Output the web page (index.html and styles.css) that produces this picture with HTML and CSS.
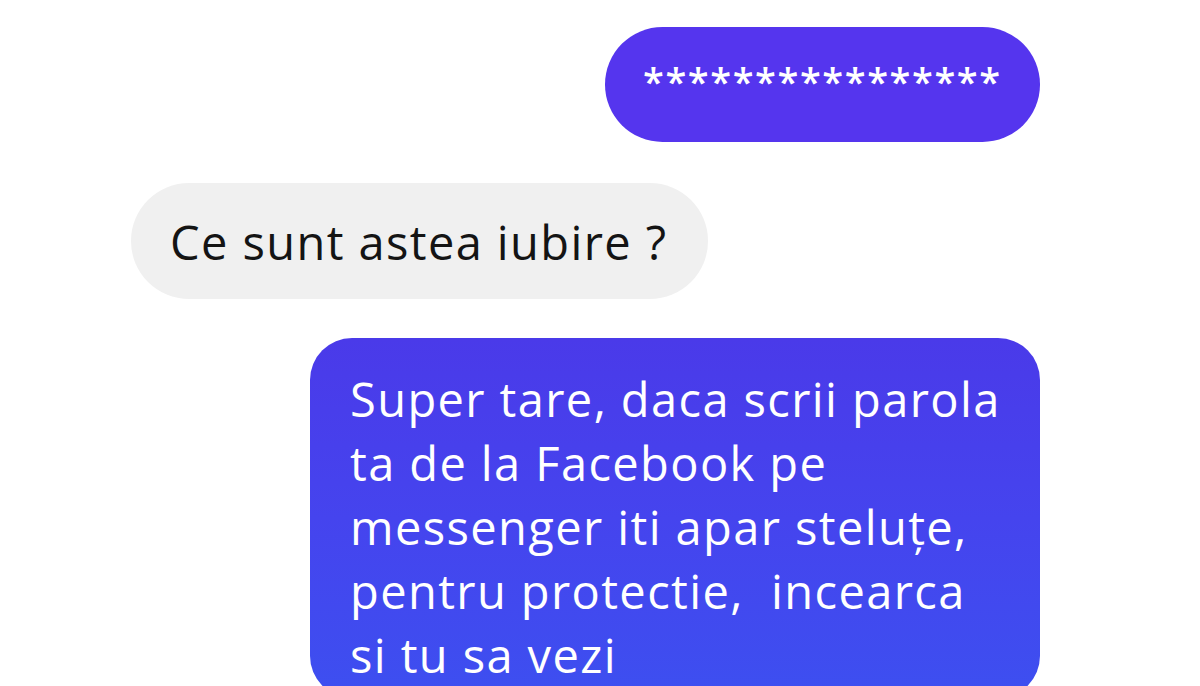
FILE: index.html
```html
<!DOCTYPE html>
<html lang="ro">
<head>
<meta charset="utf-8">
<title>Chat</title>
<link rel="stylesheet" href="styles.css">
</head>
<body>
<main class="chat">
  <div class="row row-out">
    <div class="bubble bubble-stars">****************</div>
  </div>
  <div class="row row-in">
    <div class="bubble bubble-in">Ce sunt astea iubire ?</div>
  </div>
  <div class="row row-out">
    <div class="bubble bubble-long">Super tare, daca scrii parola<br>ta de la Facebook pe<br>messenger iti apar steluțe,<br>pentru protectie,&nbsp; incearca<br>si tu sa vezi</div>
  </div>
</main>
</body>
</html>
```
FILE: styles.css
```css
html, body {
  margin: 0;
  padding: 0;
  background: #ffffff;
  overflow: hidden;
}
.chat {
  width: 1200px;
  height: 686px;
  padding-top: 27px;
  box-sizing: border-box;
  display: flex;
  flex-direction: column;
  overflow: hidden;
  font-family: "Open Sans", "Liberation Sans", sans-serif;
  font-size: 47px;
  letter-spacing: 1.4px;
}
.row {
  display: flex;
  flex-shrink: 0;
}
.row-out {
  justify-content: flex-end;
  padding-right: 160px;
}
.row-in {
  justify-content: flex-start;
  padding-left: 131px;
  margin-top: 41px;
}
.row-out + .row-in + .row-out {
  margin-top: 39px;
}
.bubble {
  box-sizing: border-box;
  white-space: nowrap;
}
.bubble-stars {
  width: 435px;
  height: 115px;
  border-radius: 58px;
  background: #5535ee;
  color: #fff;
  padding: 0 0 0 38px;
  font-size: 38px;
  font-weight: 600;
  line-height: 108px;
  letter-spacing: 1.6px;
}
.bubble-in {
  width: 577px;
  height: 116px;
  border-radius: 58px;
  background: #f0f0f0;
  color: #141414;
  padding: 31px 0 0 39px;
  line-height: 56px;
}
.bubble-long {
  width: 730px;
  height: 360px;
  border-radius: 42px;
  background: linear-gradient(180deg, #4a3ae9 0%, #4544ee 50%, #3d4ff0 100%);
  color: #fff;
  padding: 29px 30px 0 40px;
  line-height: 64px;
}
```
